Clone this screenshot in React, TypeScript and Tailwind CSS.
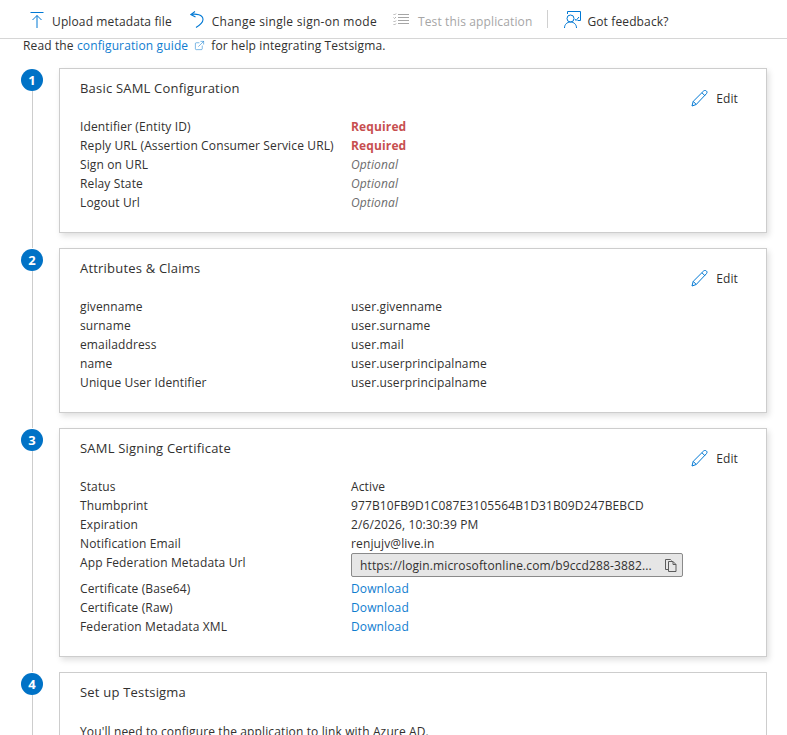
import { ReactNode } from "react";
import { ExternalLink } from "lucide-react";

type Row = { label: string; value: ReactNode };

function UploadIcon() {
  return (
    <svg className="-mt-1" width="14" height="17" viewBox="0 0 14 17" fill="none" stroke="#0078d4" strokeWidth="1">
      <path d="M0.5 1.5h13M7 17V4.5M2.5 9L7 4.5 11.5 9" />
    </svg>
  );
}

function UndoIcon() {
  return (
    <svg className="-mt-1" width="14" height="17" viewBox="0 0 14 17" fill="none" stroke="#0078d4" strokeWidth="1.1">
      <path d="M5 0.5L0.8 3.5 5.5 6M0.8 3.5C6 2.5 13 3.5 13 8.5c0 3-3 5.5-7 8" />
    </svg>
  );
}

function ChecklistIcon() {
  return (
    <svg className="-mt-[3px]" width="16" height="13" viewBox="0 0 16 13" fill="none" stroke="#a6a6a6" strokeWidth="1">
      <path d="M5 1.5h11M5 4.5h11M5 7.5h11M5 10.5h11" />
      <path d="M0.5 1l1 1 1.5-1.5M0.5 4.5l1 1 1.5-1.5M0.5 8l1 1 1.5-1.5M0.5 11l1 1 1.5-1.5" strokeWidth="0.9" />
    </svg>
  );
}

function FeedbackIcon() {
  return (
    <svg className="-mt-1" width="17" height="17" viewBox="0 0 17 17" fill="none" stroke="#0078d4" strokeWidth="1">
      <path d="M3.5 3V0.5h13v9h-3" />
      <circle cx="6.5" cy="7.5" r="3.5" />
      <path d="M0.5 17c0-3.5 2.5-6 6-6s6 2.5 6 6" />
      <path d="M11 8l1 1.5 3-3.5" />
    </svg>
  );
}

function PencilIcon() {
  return (
    <svg width="17" height="17" viewBox="0 0 17 17" fill="none" stroke="#0078d4" strokeWidth="1">
      <path d="M1 16l1.2-4.6L12.6 1c.9-.8 2-.7 2.8 0s.8 1.9 0 2.7L5.2 14.5 1 16z" />
      <path d="M2.2 11.4l3 3M11 2.8l3 3" />
    </svg>
  );
}

function CopyIcon() {
  return (
    <svg width="12" height="13" viewBox="0 0 12 13" fill="none" stroke="#5c5c5c" strokeWidth="1">
      <path d="M3.5 10.5h-3v-10h5l1 1" />
      <path d="M3.5 2.5h4.5l3 3v7h-7.5z" />
      <path d="M8 2.5v3h3" />
    </svg>
  );
}

function Card({ title, rows, className }: { title: string; rows: Row[]; className: string }) {
  return (
    <div className={`flex flex-1 justify-between border border-[#cdcdcd] bg-white pl-5 pr-7 pt-[9px] shadow-[2px_3px_6px_rgba(0,0,0,0.13)] ${className}`}>
      <div>
        <div className="h-5 text-[13px] leading-5 tracking-[0.2px]">{title}</div>
        <div className="mt-[19px]">
          {rows.map((r) => (
            <div key={r.label} className="flex min-h-[19px]">
              <div className="w-[271px] shrink-0">{r.label}</div>
              <div>{r.value}</div>
            </div>
          ))}
        </div>
      </div>
      <div className="mt-[11px] flex h-[19px] items-center gap-2">
        <PencilIcon />
        <span>Edit</span>
      </div>
    </div>
  );
}

function Step({ n, last, children }: { n: number; last?: boolean; children: ReactNode }) {
  return (
    <div className={last ? "flex" : "flex pb-[15px]"}>
      <div className={last ? "flex w-[54px] shrink-0 flex-col items-center" : "-mb-[15px] flex w-[54px] shrink-0 flex-col items-center"}>
        <div className="mt-px flex h-[22px] w-[22px] shrink-0 items-center justify-center rounded-full bg-[#0072c6] text-[13px] font-bold text-white">
          {n}
        </div>
        <div className="w-px flex-1 bg-[#cdcdcd]" />
      </div>
      {children}
    </div>
  );
}

const Req = () => <span className="font-bold text-[#c74f4f]">Required</span>;
const Opt = () => <span className="italic text-[#6b6b6b]">Optional</span>;
const Dl = () => <span className="text-[#0f7dd0]">Download</span>;

export default function App() {
  return (
    <div className="h-[735px] w-[787px] overflow-hidden bg-white font-['Open_Sans',sans-serif] text-[12px] leading-[19px] tracking-[0.13px] text-[#323130]">
      <div className="flex h-[39px] items-center border-b border-[#d6d6d6] pl-[30px] pt-[4px]">
        <div className="flex items-center gap-2">
          <UploadIcon />
          <span>Upload metadata file</span>
        </div>
        <div className="ml-[18px] flex items-center gap-2">
          <UndoIcon />
          <span className="tracking-[0.3px]">Change single sign-on mode</span>
        </div>
        <div className="ml-4 flex items-center gap-[9px] text-[#a6a6a6]">
          <ChecklistIcon />
          <span>Test this application</span>
        </div>
        <div className="ml-[15px] -mt-1 h-[18px] w-px bg-[#d0d0d0]" />
        <div className="ml-4 flex items-center gap-[6px]">
          <FeedbackIcon />
          <span>Got feedback?</span>
        </div>
      </div>

      <div className="flex h-[29px] items-start pl-[23px] leading-[13px]">
        <span>Read the&nbsp;</span>
        <span className="flex items-center text-[#0f7dd0]">
          configuration guide
          <ExternalLink className="mx-[6px] h-[11px] w-[11px]" strokeWidth={1.2} />
        </span>
        <span>for help integrating Testsigma.</span>
      </div>

      <div className="flex flex-col pl-[5px] pr-5">
        <Step n={1}>
          <Card
            title="Basic SAML Configuration"
            className="h-[165px]"
            rows={[
              { label: "Identifier (Entity ID)", value: <Req /> },
              { label: "Reply URL (Assertion Consumer Service URL)", value: <Req /> },
              { label: "Sign on URL", value: <Opt /> },
              { label: "Relay State", value: <Opt /> },
              { label: "Logout Url", value: <Opt /> },
            ]}
          />
        </Step>
        <Step n={2}>
          <Card
            title="Attributes & Claims"
            className="h-[165px]"
            rows={[
              { label: "givenname", value: "user.givenname" },
              { label: "surname", value: "user.surname" },
              { label: "emailaddress", value: "user.mail" },
              { label: "name", value: "user.userprincipalname" },
              { label: "Unique User Identifier", value: "user.userprincipalname" },
            ]}
          />
        </Step>
        <Step n={3}>
          <Card
            title="SAML Signing Certificate"
            className="h-[229px]"
            rows={[
              { label: "Status", value: "Active" },
              { label: "Thumbprint", value: "977B10FB9D1C087E3105564B1D31B09D247BEBCD" },
              { label: "Expiration", value: "2/6/2026, 10:30:39 PM" },
              { label: "Notification Email", value: "renjujv@live.in" },
              {
                label: "App Federation Metadata Url",
                value: (
                  <div className="mb-[2px] flex h-6 w-[332px] items-center justify-between rounded-[2px] border border-[#8a8a8a] bg-[#e6e6e6] pl-2 pr-[5px]">
                    <span>https://login.microsoftonline.com/b9ccd288-3882...</span>
                    <CopyIcon />
                  </div>
                ),
              },
              { label: "Certificate (Base64)", value: <Dl /> },
              { label: "Certificate (Raw)", value: <Dl /> },
              { label: "Federation Metadata XML", value: <Dl /> },
            ]}
          />
        </Step>
        <Step n={4} last>
          <div className="h-[120px] flex-1 border border-[#cdcdcd] bg-white pl-5 pr-7 pt-[9px]">
            <div className="h-5 text-[13px] leading-5 tracking-[0.2px]">Set up Testsigma</div>
            <div className="mt-5">You'll need to configure the application to link with Azure AD.</div>
          </div>
        </Step>
      </div>
    </div>
  );
}
